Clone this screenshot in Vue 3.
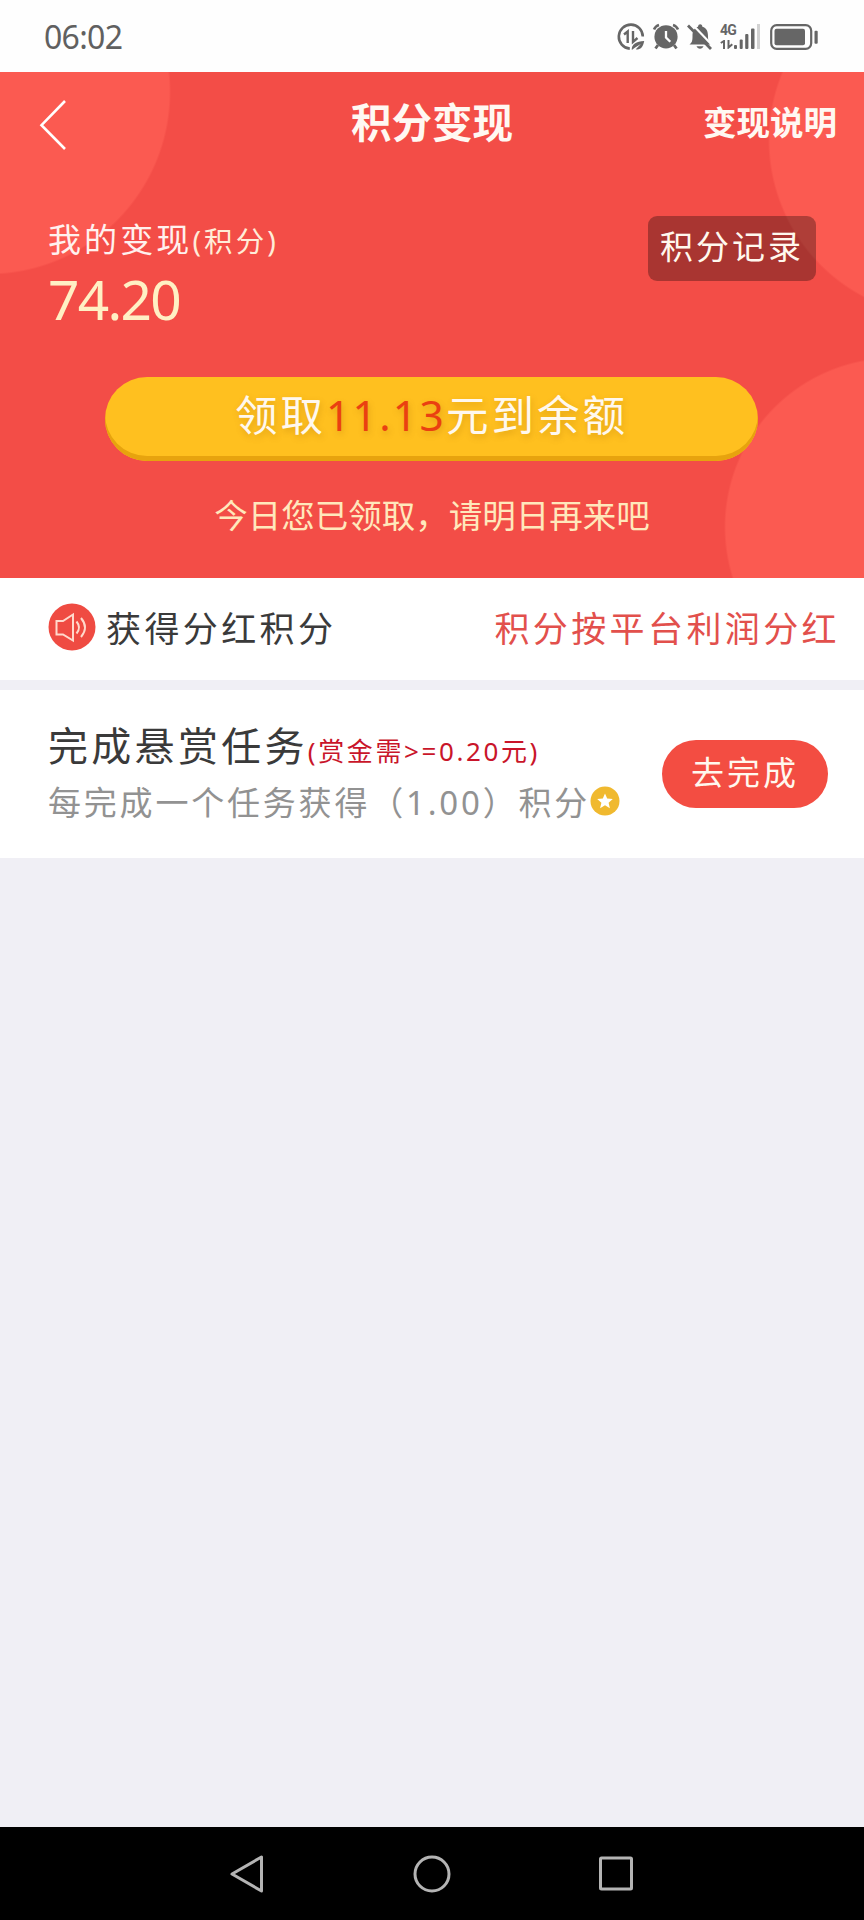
<script setup>
import { ref, computed } from 'vue'

const points = ref(74.2)
const rate = 0.15
const minReward = 0.2
const taskPoints = 1

const cash = computed(() => (points.value * rate).toFixed(2))
</script>

<template>
  <div class="screen">
    <header class="status-bar">
      <span class="time">06:02</span>
      <div class="status-icons">
        <!-- data saver -->
        <svg class="data" width="28" height="28" viewBox="0 0 28 28" fill="none" stroke="#666" stroke-width="2.6">
          <path d="M12.8 25.6A12 12 0 1 1 25.8 13.5" />
          <path d="M7 11.5l3.7-3v11.5M16 8v10.8l4.5-3.8" stroke-width="2.4" />
          <path d="M14.8 27c-.5-5.5 4.5-8.6 12.4-9-1 6-4.2 9.5-8.4 8.2l5-5.2-6 3.7z" fill="#666" stroke="none" />
        </svg>
        <!-- alarm -->
        <svg class="alarm" width="28" height="28" viewBox="0 0 28 28" fill="none" stroke="#666">
          <circle cx="14" cy="13.8" r="11.6" fill="#666" stroke="none" />
          <path d="M2 6.5Q3.5 3 7 2M26 6.5Q24.5 3 21 2" stroke-width="2.6" />
          <path d="M6 22l-2.5 3.5M22 22l2.5 3.5" stroke-width="2.8" />
          <path d="M14 8v6.5l4.3 4.3" stroke="#fff" stroke-width="2.3" />
        </svg>
        <!-- muted bell -->
        <svg class="bell" width="26" height="28" viewBox="0 0 26 28">
          <path d="M2.5 21.5c2.5-2 3-3.5 3-8.5 0-5 1.8-8 5.5-9.2C11.3.5 15 .5 15.4 3.7 19.5 5 21 8 21 13c0 5 .8 6.5 3 8.5z" fill="#666" />
          <path d="M9.5 23.3h7c-1 3.2-6 3.2-7 0z" fill="#666" />
          <path d="M3.5-.5L26 23" stroke="#fff" stroke-width="2.2" />
          <path d="M1 2.5L24 26" stroke="#666" stroke-width="2.8" />
        </svg>
        <div class="signal">
          <div class="network">
            <span class="label">4G</span>
            <svg width="14" height="9" viewBox="0 0 14 9" fill="none" stroke="#666" stroke-width="2">
              <path d="M.8 3L4 1v8M8.5 0v7.5l3.8-3.3" />
            </svg>
          </div>
          <svg width="27" height="25" viewBox="0 0 27 25" fill="#666">
            <rect x="0" y="21" width="3" height="4" rx="1" />
            <rect x="5.7" y="15.5" width="3" height="9.5" rx="1" />
            <rect x="11.2" y="10" width="3.2" height="15" rx="1" />
            <rect x="17" y="4.5" width="3.5" height="20.5" rx="1" />
            <rect x="23" y="0" width="3" height="25" fill="#d2d2d2" />
          </svg>
        </div>
        <svg class="battery" width="48" height="26" viewBox="0 0 48 26">
          <rect x="1.2" y="1.2" width="40" height="23.6" rx="5.5" fill="none" stroke="#666" stroke-width="2.2" />
          <rect x="4.5" y="4.8" width="30.5" height="16.5" rx="2" fill="#666" />
          <rect x="44.5" y="6.8" width="3.2" height="13" rx="1" fill="#666" />
        </svg>
      </div>
    </header>

    <section class="hero">
      <nav class="nav">
        <svg class="back" width="28" height="52" viewBox="0 0 28 52" fill="none" stroke="#fff" stroke-width="2.6">
          <path d="M26 2L2.5 26.2L26 50" />
        </svg>
        <h1>积分变现</h1>
        <a class="help">变现说明</a>
      </nav>

      <div class="balance">
        <div>
          <p class="balance-label">我的变现<small>(积分)</small></p>
          <p class="balance-value">{{ points.toFixed(2) }}</p>
        </div>
        <button class="record">积分记录</button>
      </div>

      <button class="claim">领取<em>{{ cash }}</em>元到余额</button>
      <p class="hint">今日您已领取，请明日再来吧</p>
    </section>

    <section class="notice">
      <svg width="48" height="48" viewBox="0 0 48 48" fill="none" stroke="#ffd9cc" stroke-width="2">
        <circle cx="24" cy="24" r="23.5" fill="#ef4b42" stroke="none" />
        <path d="M8.5 18h6.5L25 11.5v26L15 31.5H8.5z" />
        <path d="M28.5 18.5q5 6 0 12M33 15q8 9.5 0 19" />
      </svg>
      <span class="notice-title">获得分红积分</span>
      <span class="notice-desc">积分按平台利润分红</span>
    </section>

    <section class="task">
      <div class="task-info">
        <p class="task-title">完成悬赏任务<small>(赏金需&gt;={{ minReward.toFixed(2) }}元)</small></p>
        <p class="task-desc">
          <span>每完成一个任务获得（{{ taskPoints.toFixed(2) }}）积分</span>
          <svg width="30" height="30" viewBox="0 0 30 30">
            <circle cx="15" cy="15" r="14.5" fill="#f0b92f" />
            <path d="M15 7.5l2.2 5 5.6.5-4.2 3.7 1.3 5.5-4.9-2.9-4.9 2.9 1.3-5.5L7.2 13l5.6-.5z" fill="#fff" />
          </svg>
        </p>
      </div>
      <button class="go">去完成</button>
    </section>

    <footer class="system-nav">
      <svg width="36" height="40" viewBox="0 0 36 40"><path d="M32.5 3v34L3 20z" /></svg>
      <svg width="40" height="40" viewBox="0 0 40 40"><circle cx="20" cy="20" r="17" /></svg>
      <svg width="36" height="40" viewBox="0 0 36 40"><rect x="1.5" y="4" width="31" height="31" rx="1" /></svg>
    </footer>
  </div>
</template>

<style>
body {
  margin: 0;
}
</style>

<style scoped>
.screen {
  display: flex;
  flex-direction: column;
  width: 864px;
  height: 1920px;
  overflow: hidden;
  background: #f0eff5;
  color: #3a3a3a;
  font-family: "Noto Sans", "Noto Sans CJK SC", sans-serif;
}

p,
h1 {
  margin: 0;
  font-weight: 400;
  white-space: nowrap;
}

svg {
  display: block;
  flex: none;
}

button {
  border: none;
  padding: 0;
  font-family: inherit;
  color: #fff8ee;
  white-space: nowrap;
}

.status-bar {
  display: flex;
  justify-content: space-between;
  box-sizing: border-box;
  height: 72px;
  padding: 23px 46px 0 44px;
  background: #fefefe;
}

.time {
  font-size: 32px;
  line-height: 27px;
  letter-spacing: -0.7px;
  color: #606060;
}

.status-icons {
  display: flex;
  align-items: flex-start;
}

.alarm {
  margin-left: 7px;
}

.bell {
  margin-left: 7px;
}

.signal {
  display: flex;
  margin-left: 7px;
  padding-top: 1px;
}

.network {
  width: 14px;
}

.label {
  display: block;
  height: 16px;
  font-family: Roboto, sans-serif;
  font-size: 14px;
  font-weight: 700;
  line-height: 12px;
  letter-spacing: -0.8px;
  color: #666;
}

.battery {
  margin: 1px 0 0 9px;
}

.hero {
  box-sizing: border-box;
  height: 506px;
  background:
    radial-gradient(circle at -12px 20px, #fb5a51 181px, transparent 183px),
    radial-gradient(circle at 946px 68px, #fb5a51 176px, transparent 178px),
    radial-gradient(circle at 894px 455px, #fb5a51 168px, transparent 170px),
    #f34d47;
}

.nav {
  display: grid;
  grid-template-columns: 1fr auto 1fr;
  align-items: center;
  height: 104px;
  padding: 0 27px;
  color: #fff8f2;
}

.back {
  margin: 1px 0 0 12px;
}

.nav h1 {
  margin-bottom: 3px;
  font-size: 40.5px;
  font-weight: 700;
  line-height: 60px;
}

.help {
  justify-self: end;
  margin-bottom: 5px;
  font-size: 33.5px;
  font-weight: 700;
  line-height: 50px;
}

.balance {
  display: flex;
  justify-content: space-between;
  align-items: flex-start;
  height: 201px;
  padding: 40px 48px 0;
  box-sizing: border-box;
}

.balance-label {
  height: 48px;
  font-size: 33px;
  line-height: 47px;
  letter-spacing: 3.1px;
  color: #fff1ee;
}

.balance-label small {
  font-size: 28.5px;
  color: #ffecd8;
}

.balance-value {
  font-size: 55px;
  line-height: 70px;
  letter-spacing: -1.7px;
  color: #fff0c4;
}

.record {
  width: 168px;
  height: 65px;
  padding-bottom: 8px;
  border-radius: 9px;
  background: rgba(0, 0, 0, 0.3);
  font-size: 33px;
  letter-spacing: 3px;
}

.claim {
  display: block;
  width: 653px;
  height: 84px;
  margin: 0 0 0 105px;
  padding-bottom: 14px;
  border-radius: 42px;
  background: #ffc01f;
  box-shadow: inset 0 -5px 0 #e7a30e;
  font-size: 42.5px;
  letter-spacing: 3px;
  text-shadow: 1px 3px 6px rgba(160, 100, 0, 0.3);
}

.claim em {
  font-style: normal;
  letter-spacing: 2.3px;
  color: #ea4011;
}

.hint {
  margin-top: 29px;
  font-size: 33.5px;
  line-height: 50px;
  text-align: center;
  color: #ffe8bc;
}

.notice {
  display: flex;
  align-items: center;
  height: 102px;
  margin-bottom: 10px;
  padding: 0 24px 0 48px;
  background: #fff;
  font-size: 35px;
  letter-spacing: 3.4px;
}

.notice svg {
  margin-bottom: 5px;
}

.notice span {
  padding-bottom: 6px;
}

.notice-title {
  margin-left: 10px;
}

.notice-desc {
  margin-left: auto;
  color: #e2504c;
}

.task {
  display: flex;
  justify-content: space-between;
  align-items: flex-start;
  box-sizing: border-box;
  height: 168px;
  padding: 25px 36px 0 48px;
  background: #fff;
}

.task-info {
  padding-top: 2px;
}

.task-title {
  height: 58px;
  font-size: 40px;
  line-height: 58px;
  letter-spacing: 3.3px;
}

.task-title small {
  font-size: 26px;
  letter-spacing: 2.6px;
  color: #c9152a;
}

.task-desc {
  display: flex;
  align-items: center;
  font-size: 33px;
  line-height: 56px;
  letter-spacing: 2.8px;
  color: #929292;
}

.task-desc svg {
  margin-bottom: 4px;
}

.go {
  width: 166px;
  height: 68px;
  margin-top: 25px;
  padding-bottom: 7px;
  border-radius: 34px;
  background: #f34d42;
  font-size: 33px;
  letter-spacing: 3px;
}

.system-nav {
  display: flex;
  justify-content: center;
  gap: 147px;
  box-sizing: border-box;
  height: 93px;
  margin-top: auto;
  padding-top: 27px;
  background: #000;
}

.system-nav svg {
  fill: none;
  stroke: #b4b4b4;
  stroke-width: 3;
  stroke-linejoin: round;
}
</style>
